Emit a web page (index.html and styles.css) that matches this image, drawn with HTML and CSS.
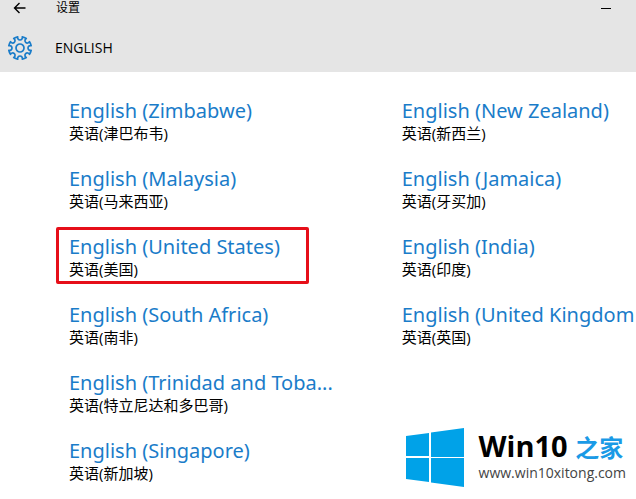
FILE: index.html
```html
<!DOCTYPE html>
<html lang="zh-CN">
<head>
  <meta charset="UTF-8">
  <meta name="viewport" content="width=device-width, initial-scale=1.0">
  <title>设置</title>
  <link rel="stylesheet" href="styles.css">
</head>
<body>
  <header class="header">
    <div class="title-bar">
      <button class="icon-button" aria-label="返回">
        <svg width="14" height="12" viewBox="0 0 14 12" fill="none" stroke="#000" stroke-width="1.4">
          <path d="M12.5 6H1.500M6.500 1L1.500 6l5 5"/>
        </svg>
      </button>
      <span class="window-title">设置</span>
      <button class="icon-button minimize" aria-label="最小化">
        <svg width="10" height="2" viewBox="0 0 10 2"><path d="M0 1h10v1H0z"/></svg>
      </button>
    </div>
    <div class="page-bar">
      <svg width="26" height="26" viewBox="-13 -13 26 26" fill="none" stroke="#1a7cc9" stroke-width="1.7" stroke-linejoin="round">
        <path d="M11.17 2.27A11.4 11.4 0 0 1 9.51 6.29A2.4 2.4 0 1 0 6.29 9.51A11.4 11.4 0 0 1 2.27 11.17A2.4 2.4 0 1 0 -2.27 11.17A11.4 11.4 0 0 1 -6.29 9.51A2.4 2.4 0 1 0 -9.51 6.29A11.4 11.4 0 0 1 -11.17 2.27A2.4 2.4 0 1 0 -11.17 -2.27A11.4 11.4 0 0 1 -9.51 -6.29A2.4 2.4 0 1 0 -6.29 -9.51A11.4 11.4 0 0 1 -2.27 -11.17A2.4 2.4 0 1 0 2.27 -11.17A11.4 11.4 0 0 1 6.29 -9.51A2.4 2.4 0 1 0 9.51 -6.29A11.4 11.4 0 0 1 11.17 -2.27A2.4 2.4 0 1 0 11.17 2.27Z"/>
        <circle r="4"/>
      </svg>
      <h1>ENGLISH</h1>
    </div>
  </header>

  <main class="languages">
    <ul class="column">
      <li><button class="language"><span class="name">English (Zimbabwe)</span><span class="local">英语(津巴布韦)</span></button></li>
      <li><button class="language"><span class="name">English (Malaysia)</span><span class="local">英语(马来西亚)</span></button></li>
      <li><button class="language selected"><span class="name">English (United States)</span><span class="local">英语(美国)</span></button></li>
      <li><button class="language"><span class="name">English (South Africa)</span><span class="local">英语(南非)</span></button></li>
      <li><button class="language"><span class="name">English (Trinidad and Toba...</span><span class="local">英语(特立尼达和多巴哥)</span></button></li>
      <li><button class="language"><span class="name">English (Singapore)</span><span class="local">英语(新加坡)</span></button></li>
    </ul>
    <ul class="column">
      <li><button class="language"><span class="name">English (New Zealand)</span><span class="local">英语(新西兰)</span></button></li>
      <li><button class="language"><span class="name">English (Jamaica)</span><span class="local">英语(牙买加)</span></button></li>
      <li><button class="language"><span class="name">English (India)</span><span class="local">英语(印度)</span></button></li>
      <li><button class="language"><span class="name">English (United Kingdom</span><span class="local">英语(英国)</span></button></li>
    </ul>
  </main>

  <div class="watermark">
    <svg width="60" height="60" viewBox="0 0 60 60" fill="#00a2e8">
      <path d="M1 8l23-3v23H1zM26 4.500L59 0v29H26zM1 30h23v24L1 51zM26 30h33v29L26 54.500z"/>
    </svg>
    <div class="brand">
      <p class="brand-name">Win10 <span>之家</span></p>
      <p class="brand-url">www.win10xitong.com</p>
    </div>
  </div>
</body>
</html>
```
FILE: styles.css
```css
* {
  box-sizing: border-box;
}

body {
  margin: 0;
  min-height: 100vh;
  background: #fff;
  color: #000;
  font-family: "Noto Sans", "Noto Sans CJK SC", sans-serif;
}

button {
  margin: 0;
  border: none;
  background: none;
  color: inherit;
  font-family: inherit;
  cursor: pointer;
}

.header {
  background: #e5e5e5;
}

.title-bar {
  display: flex;
  align-items: center;
  height: 16px;
  padding: 0 18px 0 8px;
}

.icon-button {
  display: flex;
  justify-content: center;
  width: 24px;
  padding: 0;
}

.window-title {
  margin-left: 24px;
  font-size: 12px;
  line-height: 16px;
}

.minimize {
  margin-left: auto;
}

.page-bar {
  display: flex;
  align-items: center;
  gap: 22px;
  height: 56px;
  padding: 8px 7px 0;
}

h1 {
  margin: 0;
  font-family: "Open Sans", sans-serif;
  font-size: 14px;
  font-weight: 400;
  line-height: 20px;
}

.languages {
  display: grid;
  grid-template-columns: minmax(0, 4fr) minmax(0, 3fr);
  column-gap: 3px;
  padding: 19px 0 0 56px;
  overflow: hidden;
}

.column {
  display: flex;
  flex-direction: column;
  gap: 11px;
  margin: 0;
  padding: 0;
  list-style: none;
}

.language {
  display: block;
  padding: 3px 26px 4px 10px;
  border: 3px solid transparent;
  border-radius: 2px;
  text-align: left;
  white-space: nowrap;
}

.language.selected {
  border-color: #e60f19;
}

.name,
.local {
  display: block;
}

.name {
  color: #1a7cc9;
  font-size: 20px;
  line-height: 28px;
}

.local {
  font-family: "Open Sans", "Noto Sans CJK SC", sans-serif;
  font-size: 15px;
  line-height: 16px;
}

/* Site badge over the bottom right corner */
.watermark {
  position: absolute;
  right: 10px;
  bottom: 11px;
  display: flex;
  align-items: center;
  gap: 14px;
}

.brand {
  padding-bottom: 4px;
}

.brand p {
  margin: 0;
  white-space: nowrap;
}

.brand-name {
  font-family: "Open Sans", "Noto Sans CJK SC", sans-serif;
  font-size: 29px;
  font-weight: 700;
  line-height: 32px;
}

.brand-name span {
  color: #1a9ae6;
  font-size: 24px;
}

.brand-url {
  color: #444;
  font-family: "Open Sans", sans-serif;
  font-size: 14px;
  line-height: 18px;
}
```
